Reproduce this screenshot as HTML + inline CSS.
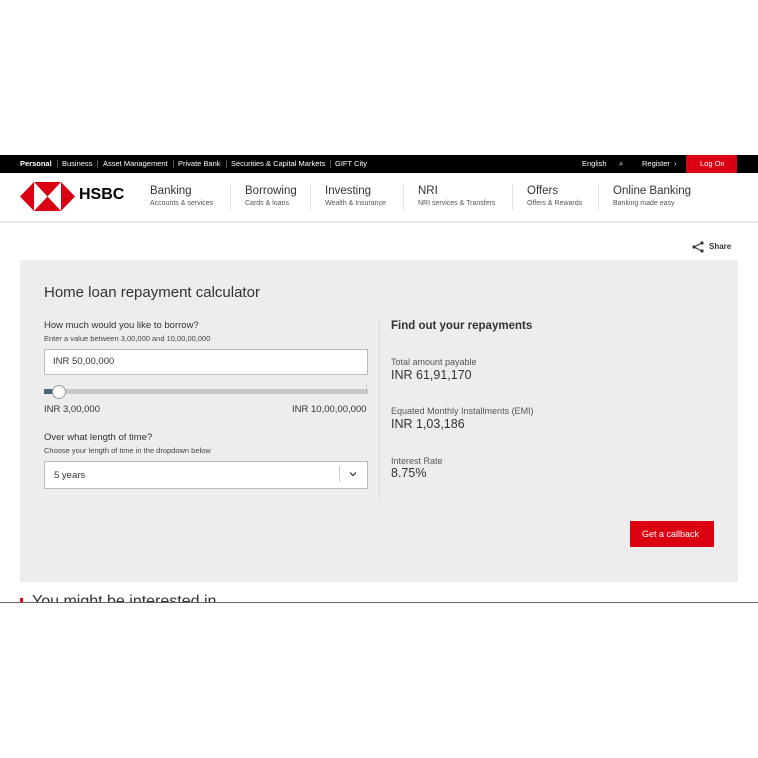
<!DOCTYPE html>
<html><head><meta charset="utf-8"><style>
*{margin:0;padding:0;box-sizing:border-box}
body{width:758px;height:758px;background:#fff;font-family:"Liberation Sans",Arial,sans-serif;position:relative;overflow:hidden;color:#333}
.a{position:absolute;white-space:nowrap}
.top{left:0;top:155px;width:758px;height:18px;background:#000}
.top span{position:absolute;top:4px;font-size:7.5px;color:#fff}
.sep{position:absolute;top:5px;width:1px;height:8px;background:#555}
.nav-t{font-size:11.5px;color:#333}
.nav-s{font-size:7px;color:#555}
.vs{position:absolute;top:184px;width:1px;height:26px;background:#e5e5e5}
</style></head><body>
<div class="a top">
<span style="left:20px;font-weight:bold">Personal</span><div class="sep" style="left:57px"></div>
<span style="left:62px">Business</span><div class="sep" style="left:97px"></div>
<span style="left:103px">Asset Management</span><div class="sep" style="left:173px"></div>
<span style="left:178px">Private Bank</span><div class="sep" style="left:226px"></div>
<span style="left:231px">Securities &amp; Capital Markets</span><div class="sep" style="left:330px"></div>
<span style="left:335px">GIFT City</span>
<span style="left:582px">English</span>
<span style="left:619px">&#x2315;</span>
<span style="left:642px">Register &nbsp;›</span>
<div style="position:absolute;left:686px;top:0;width:51px;height:18px;background:#db0011"></div>
<span style="left:700px">Log On</span>
</div>
<div class="a" style="left:35px;top:173px;border-left:3px solid transparent;border-right:3px solid transparent;border-top:3px solid #fff"></div>
<svg class="a" style="left:20px;top:182px" width="55" height="29" viewBox="0 0 55 29">
<polygon points="0,14.5 14,0 14,29" fill="#db0011"/>
<polygon points="55,14.5 41,0 41,29" fill="#db0011"/>
<polygon points="14,0 41,0 27.5,14.5" fill="#db0011"/>
<polygon points="14,29 41,29 27.5,14.5" fill="#db0011"/>
</svg>
<div class="a" style="left:79px;top:186px;font-size:16px;font-weight:bold;color:#000">HSBC</div>
<div class="a nav-t" style="left:150px;top:185px">Banking</div><div class="a nav-s" style="left:150px;top:200px">Accounts &amp; services</div>
<div class="vs" style="left:230px"></div>
<div class="a nav-t" style="left:245px;top:185px">Borrowing</div><div class="a nav-s" style="left:245px;top:200px">Cards &amp; loans</div>
<div class="vs" style="left:310px"></div>
<div class="a nav-t" style="left:325px;top:185px">Investing</div><div class="a nav-s" style="left:325px;top:200px">Wealth &amp; Insurance</div>
<div class="vs" style="left:403px"></div>
<div class="a nav-t" style="left:418px;top:185px">NRI</div><div class="a nav-s" style="left:418px;top:200px">NRI services &amp; Transfers</div>
<div class="vs" style="left:512px"></div>
<div class="a nav-t" style="left:527px;top:185px">Offers</div><div class="a nav-s" style="left:527px;top:200px">Offers &amp; Rewards</div>
<div class="vs" style="left:598px"></div>
<div class="a nav-t" style="left:613px;top:185px">Online Banking</div><div class="a nav-s" style="left:613px;top:200px">Banking made easy</div>
<div class="a" style="left:0;top:221px;width:758px;height:2px;background:#e8e8e8"></div>
<svg class="a" style="left:692px;top:241px" width="12" height="12" viewBox="0 0 12 12"><circle cx="10" cy="2" r="1.6" fill="#333"/><circle cx="2" cy="6" r="1.6" fill="#333"/><circle cx="10" cy="10" r="1.6" fill="#333"/><path d="M10 2L2 6L10 10" stroke="#333" fill="none"/></svg>
<div class="a" style="left:709px;top:242px;font-size:8px;font-weight:bold">Share</div>
<div class="a" style="left:20px;top:260px;width:718px;height:322px;background:#ededed"></div>
<div class="a" style="left:44px;top:284px;font-size:15px;color:#333">Home loan repayment calculator</div>
<div class="a" style="left:44px;top:320px;font-size:9.5px">How much would you like to borrow?</div>
<div class="a" style="left:44px;top:334px;font-size:7.5px;color:#444">Enter a value between 3,00,000 and 10,00,00,000</div>
<div class="a" style="left:44px;top:349px;width:324px;height:26px;background:#fff;border:1px solid #bbb"></div>
<div class="a" style="left:53px;top:356px;font-size:9.5px">INR 50,00,000</div>
<div class="a" style="left:44px;top:389px;width:324px;height:5px;background:#c8c8c8"></div>
<div class="a" style="left:44px;top:389px;width:12px;height:5px;background:#4d6474"></div>
<div class="a" style="left:366px;top:383px;width:1px;height:11px;background:#c8c8c8"></div>
<div class="a" style="left:52px;top:385px;width:14px;height:14px;border-radius:50%;background:#fff;border:1px solid #999"></div>
<div class="a" style="left:44px;top:404px;font-size:9.5px">INR 3,00,000</div>
<div class="a" style="left:292px;top:404px;font-size:9.5px">INR 10,00,00,000</div>
<div class="a" style="left:44px;top:432px;font-size:9.5px">Over what length of time?</div>
<div class="a" style="left:44px;top:446px;font-size:7.5px;color:#444">Choose your length of time in the dropdown below</div>
<div class="a" style="left:44px;top:461px;width:324px;height:28px;background:#fff;border:1px solid #bbb"></div>
<div class="a" style="left:54px;top:470px;font-size:9.5px">5 years</div>
<div class="a" style="left:339px;top:466px;width:1px;height:16px;background:#ccc"></div>
<svg class="a" style="left:349px;top:471px" width="8" height="6" viewBox="0 0 8 6"><path d="M1 1.5L4 4.5L7 1.5" stroke="#333" stroke-width="1.2" fill="none"/></svg>
<div class="a" style="left:379px;top:320px;width:1px;height:182px;background:#ddd"></div>
<div class="a" style="left:391px;top:320px;font-size:11.5px;font-weight:bold">Find out your repayments</div>
<div class="a" style="left:391px;top:357px;font-size:9px;color:#555">Total amount payable</div>
<div class="a" style="left:391px;top:368px;font-size:12.5px">INR 61,91,170</div>
<div class="a" style="left:391px;top:406px;font-size:9px;color:#555">Equated Monthly Installments (EMI)</div>
<div class="a" style="left:391px;top:417px;font-size:12.5px">INR 1,03,186</div>
<div class="a" style="left:391px;top:456px;font-size:9px;color:#555">Interest Rate</div>
<div class="a" style="left:391px;top:466px;font-size:12.5px">8.75%</div>
<div class="a" style="left:630px;top:521px;width:84px;height:26px;background:#db0011"></div>
<div class="a" style="left:642px;top:529px;font-size:9px;color:#fff">Get a callback</div>
<div class="a" style="left:0;top:592px;width:758px;height:10px;overflow:hidden">
<div class="a" style="left:20px;top:6px;width:3px;height:6px;background:#db0011"></div>
<div class="a" style="left:32px;top:1px;font-size:16px;color:#333">You might be interested in</div>
</div>
<div class="a" style="left:0;top:602px;width:758px;height:1px;background:#666"></div>
</body></html>
